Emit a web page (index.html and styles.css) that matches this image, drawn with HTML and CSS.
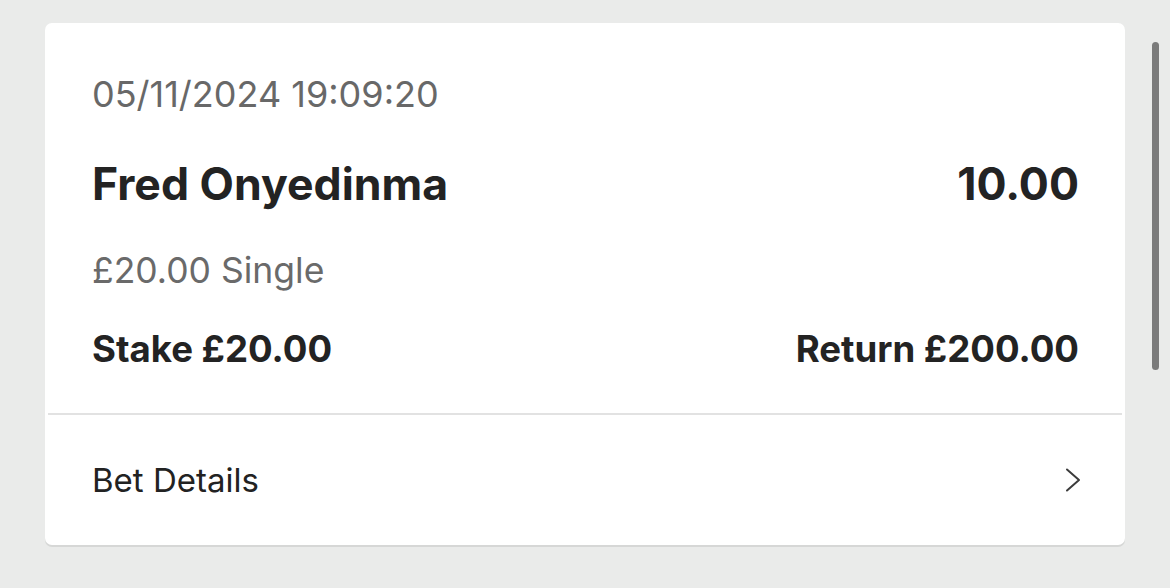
FILE: index.html
```html
<!DOCTYPE html>
<html lang="en">
<head>
<meta charset="utf-8">
<title>Bet</title>
<link rel="stylesheet" href="styles.css">
</head>
<body>
<div class="page">
  <div class="card">
    <div class="summary">
      <div class="date">05/11/2024 19:09:20</div>
      <div class="row name-row">
        <span class="name">Fred Onyedinma</span>
        <span class="odds">10.00</span>
      </div>
      <div class="type">£20.00 Single</div>
      <div class="row money-row">
        <span class="stake">Stake £20.00</span>
        <span class="return">Return £200.00</span>
      </div>
    </div>
    <div class="divider"></div>
    <div class="details">
      <span class="details-label">Bet Details</span>
      <svg class="chevron" width="16" height="24" viewBox="0 0 16 24" aria-hidden="true">
        <path d="M2 1.5 L14 12 L2 22.5" fill="none" stroke="#3c3c3c" stroke-width="2" stroke-linecap="round" stroke-linejoin="round"/>
      </svg>
    </div>
  </div>
</div>
<div class="scrollbar"></div>
</body>
</html>
```
FILE: styles.css
```css
html, body {
  margin: 0;
  padding: 0;
}
body {
  background: #eaebea;
  font-family: Inter, "Noto Sans", "Liberation Sans", sans-serif;
  color: #232323;
  width: 1170px;
  height: 588px;
  overflow: hidden;
}
.page {
  padding: 23px 45px 0 45px;
}
.card {
  background: #ffffff;
  border-radius: 7px;
  box-shadow: 0 2px 0 #d6d7d6;
}
.summary {
  padding: 53px 46px 0 47px;
}
.date {
  font-size: 36px;
  line-height: 36px;
  color: #686868;
}
.row {
  display: flex;
  justify-content: space-between;
  align-items: baseline;
}
.name-row {
  margin-top: 50px;
  font-size: 44.6px;
  line-height: 44px;
  font-weight: 700;
}
.type {
  margin-top: 47px;
  font-size: 35.5px;
  line-height: 36px;
  color: #6a6a6a;
}
.money-row {
  margin-top: 42px;
  font-size: 36.6px;
  line-height: 36px;
  font-weight: 700;
  padding-bottom: 46px;
}
.divider {
  height: 2px;
  background: #e2e2e2;
  margin: 0 3px;
}
.details {
  height: 130px;
  display: flex;
  align-items: center;
  justify-content: space-between;
  padding: 0 44px 0 47px;
}
.details-label {
  font-size: 33px;
  color: #222222;
}
.chevron {
  display: block;
}
.scrollbar {
  position: absolute;
  left: 1152px;
  top: 42px;
  width: 7px;
  height: 328px;
  border-radius: 4px;
  background: #7b7b7b;
}
```
